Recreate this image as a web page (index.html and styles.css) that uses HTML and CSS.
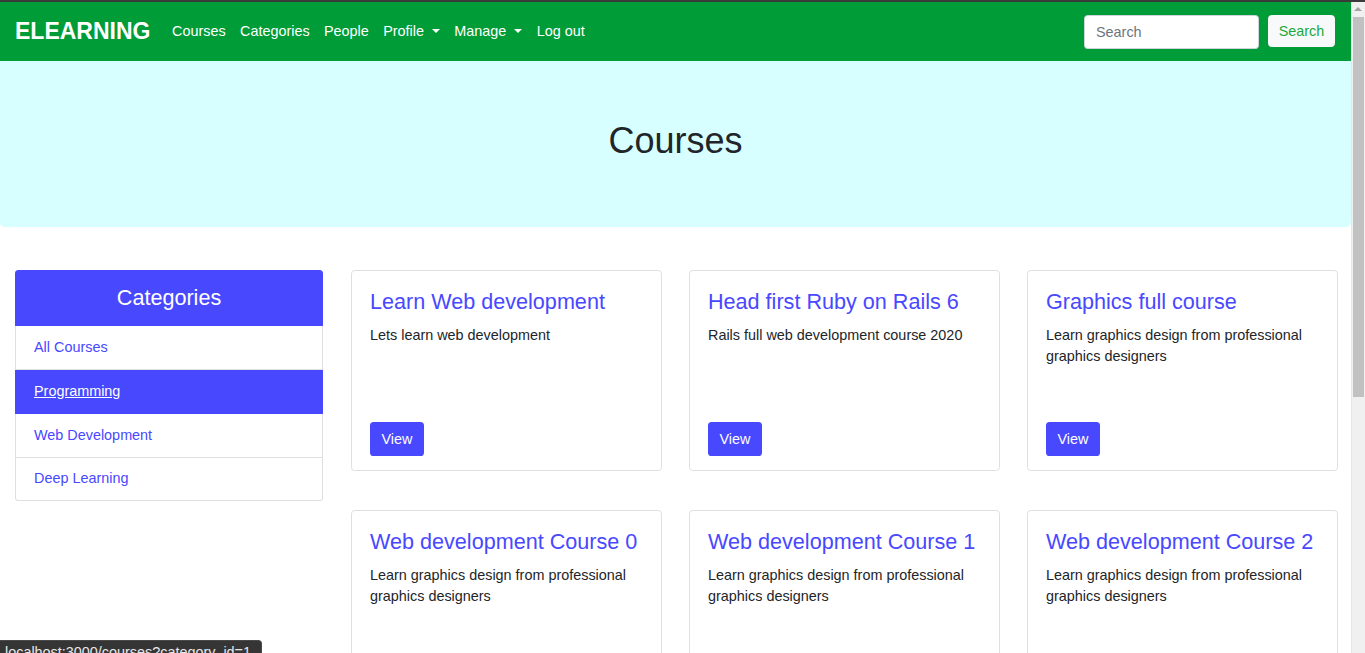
FILE: index.html
```html
<!DOCTYPE html>
<html lang="en">
<head>
<meta charset="utf-8">
<title>ELEARNING - Courses</title>
<link rel="stylesheet" href="styles.css">
</head>
<body>
<div class="chrome-top"></div>
<div class="page">
<nav class="navbar">
  <a class="brand" href="#">ELEARNING</a>
  <ul class="nav-links">
    <li><a href="#">Courses</a></li>
    <li><a href="#">Categories</a></li>
    <li><a href="#">People</a></li>
    <li><a href="#" class="dropdown">Profile</a></li>
    <li><a href="#" class="dropdown">Manage</a></li>
    <li><a href="#">Log out</a></li>
  </ul>
  <form class="search-form">
    <input class="search-input" type="search" placeholder="Search">
    <button class="search-btn" type="button">Search</button>
  </form>
</nav>

<header class="jumbotron">
  <h1>Courses</h1>
</header>

<main class="content">
  <aside class="sidebar">
    <div class="cat-card">
      <div class="cat-header">Categories</div>
      <ul class="cat-list">
        <li><a href="#">All Courses</a></li>
        <li class="active"><a href="#">Programming</a></li>
        <li><a href="#">Web Development</a></li>
        <li><a href="#">Deep Learning</a></li>
      </ul>
    </div>
  </aside>
  <section class="courses">
    <div class="course-card">
      <h4 class="course-title">Learn Web development</h4>
      <p class="course-desc">Lets learn web development</p>
      <a class="btn-view" href="#">View</a>
    </div>
    <div class="course-card">
      <h4 class="course-title">Head first Ruby on Rails 6</h4>
      <p class="course-desc">Rails full web development course 2020</p>
      <a class="btn-view" href="#">View</a>
    </div>
    <div class="course-card">
      <h4 class="course-title">Graphics full course</h4>
      <p class="course-desc">Learn graphics design from professional graphics designers</p>
      <a class="btn-view" href="#">View</a>
    </div>
    <div class="course-card">
      <h4 class="course-title">Web development Course 0</h4>
      <p class="course-desc">Learn graphics design from professional graphics designers</p>
      <a class="btn-view" href="#">View</a>
    </div>
    <div class="course-card">
      <h4 class="course-title">Web development Course 1</h4>
      <p class="course-desc">Learn graphics design from professional graphics designers</p>
      <a class="btn-view" href="#">View</a>
    </div>
    <div class="course-card">
      <h4 class="course-title">Web development Course 2</h4>
      <p class="course-desc">Learn graphics design from professional graphics designers</p>
      <a class="btn-view" href="#">View</a>
    </div>
  </section>
</main>
</div>

<div class="scrollbar" aria-hidden="true">
  <div class="scroll-arrow"></div>
  <div class="scroll-thumb"></div>
</div>

<div class="status-bubble">localhost:3000/courses?category_id=1</div>
</body>
</html>
```

FILE: styles.css
```css
* { box-sizing: border-box; }

html, body {
  margin: 0;
  padding: 0;
}

body {
  font-family: "Liberation Sans", Arial, sans-serif;
  font-size: 14.4px;
  line-height: 1.5;
  color: #212529;
  background: #fff;
}

a { text-decoration: none; }

.chrome-top {
  height: 2px;
  background: #3a3a3a;
}

.page {
  margin-right: 14px;
}

.navbar {
  height: 59px;
  background: #009c38;
  display: flex;
  align-items: center;
  padding: 0 15px;
}

.brand {
  color: #fff;
  font-weight: bold;
  font-size: 23px;
  line-height: 1;
  margin-right: 14.4px;
}

.nav-links {
  list-style: none;
  display: flex;
  margin: 0;
  padding: 0;
  flex: 1;
}

.nav-links a {
  display: block;
  color: #fff;
  padding: 7.2px;
  font-size: 14.4px;
}

.dropdown::after {
  content: "";
  display: inline-block;
  margin-left: 8px;
  vertical-align: 3px;
  border-top: 4.3px solid #fff;
  border-left: 4.3px solid transparent;
  border-right: 4.3px solid transparent;
}

.search-form {
  display: flex;
  align-items: center;
  gap: 9px;
  margin-right: 1px;
}

.search-input {
  width: 175px;
  height: 34px;
  border: 1px solid #ced4da;
  border-radius: 3.6px;
  padding: 5px 11px;
  font-family: inherit;
  font-size: 14.4px;
  color: #495057;
  background: #fff;
}

.search-input::placeholder { color: #6c757d; }

.search-btn {
  height: 32px;
  width: 67px;
  border: 1px solid #f8f9fa;
  border-radius: 3.6px;
  background: #f8f9fa;
  color: #1aa83e;
  font-family: inherit;
  font-size: 14.4px;
  padding: 0;
  margin-top: -2px;
}

.jumbotron {
  background: #d8ffff;
  height: 166px;
  border-radius: 0 0 4.3px 4.3px;
  margin-bottom: 43px;
  padding-top: 57.6px;
}

.jumbotron h1 {
  margin: 0;
  text-align: center;
  font-size: 36px;
  font-weight: 500;
  line-height: 1.2;
  color: #212529;
}

.content {
  display: grid;
  grid-template-columns: 308px 1fr;
  column-gap: 28px;
  padding: 0 13px 0 15px;
  align-items: start;
}

.cat-card {
  height: 201px;
  border: 1px solid #dfdfdf;
  border-radius: 3.6px;
}

.cat-header {
  background: #4848ff;
  color: #fff;
  height: 56px;
  margin: -1px -1px 0;
  border-radius: 3.6px 3.6px 0 0;
  text-align: center;
  font-size: 21.6px;
  line-height: 56px;
}

.cat-list {
  list-style: none;
  margin: 0 -1px;
  padding: 0;
}

.cat-list li {
  border: 1px solid #dfdfdf;
  border-top: 0;
  height: 44px;
  padding: 0 18px;
  display: flex;
  align-items: center;
  background: #fff;
}

.cat-list li:last-child { border-radius: 0 0 3.6px 3.6px; height: 43px; }

.cat-list li a {
  color: #4848ff;
  font-size: 14.4px;
}

.cat-list li.active {
  background: #4848ff;
  border-color: #4848ff;
}

.cat-list li.active a {
  color: #fff;
  text-decoration: underline;
}

.courses {
  display: grid;
  grid-template-columns: repeat(3, 1fr);
  column-gap: 27px;
  row-gap: 39px;
}

.course-card {
  height: 201px;
  border: 1px solid #dfdfdf;
  border-radius: 3.6px;
  padding: 18px 18px 14px;
  display: flex;
  flex-direction: column;
  align-items: flex-start;
}

.course-title {
  margin: 0 0 10px;
  font-size: 21.6px;
  font-weight: 500;
  line-height: 1.2;
  color: #4848ff;
}

.course-desc {
  margin: 0;
  font-size: 14.4px;
  line-height: 21px;
}

.btn-view {
  margin-top: auto;
  display: inline-block;
  background: #4848ff;
  color: #fff;
  border-radius: 3.6px;
  height: 34px;
  line-height: 34px;
  padding: 0 11.5px;
  font-size: 14.4px;
}

.scrollbar {
  position: fixed;
  top: 2px;
  right: 0;
  bottom: 0;
  width: 14px;
  background: #f0f0f0;
  border-left: 1px solid #e6e6e6;
}

.scroll-arrow {
  position: absolute;
  top: 5px;
  left: 2px;
  border-bottom: 4px solid #a3a3a3;
  border-left: 4px solid transparent;
  border-right: 4px solid transparent;
}

.scroll-thumb {
  position: absolute;
  top: 15px;
  left: 1px;
  width: 11px;
  height: 380px;
  background: #c1c1c1;
}

.status-bubble {
  position: fixed;
  left: 0;
  bottom: -10px;
  background: #353535;
  color: #e8e8e8;
  font-size: 14.4px;
  line-height: 22px;
  padding: 0 10px 0 5px;
  border-radius: 0 4px 0 0;
  border: 1px solid #4a4a4a;
  border-left: 0;
  border-bottom: 0;
}
```
